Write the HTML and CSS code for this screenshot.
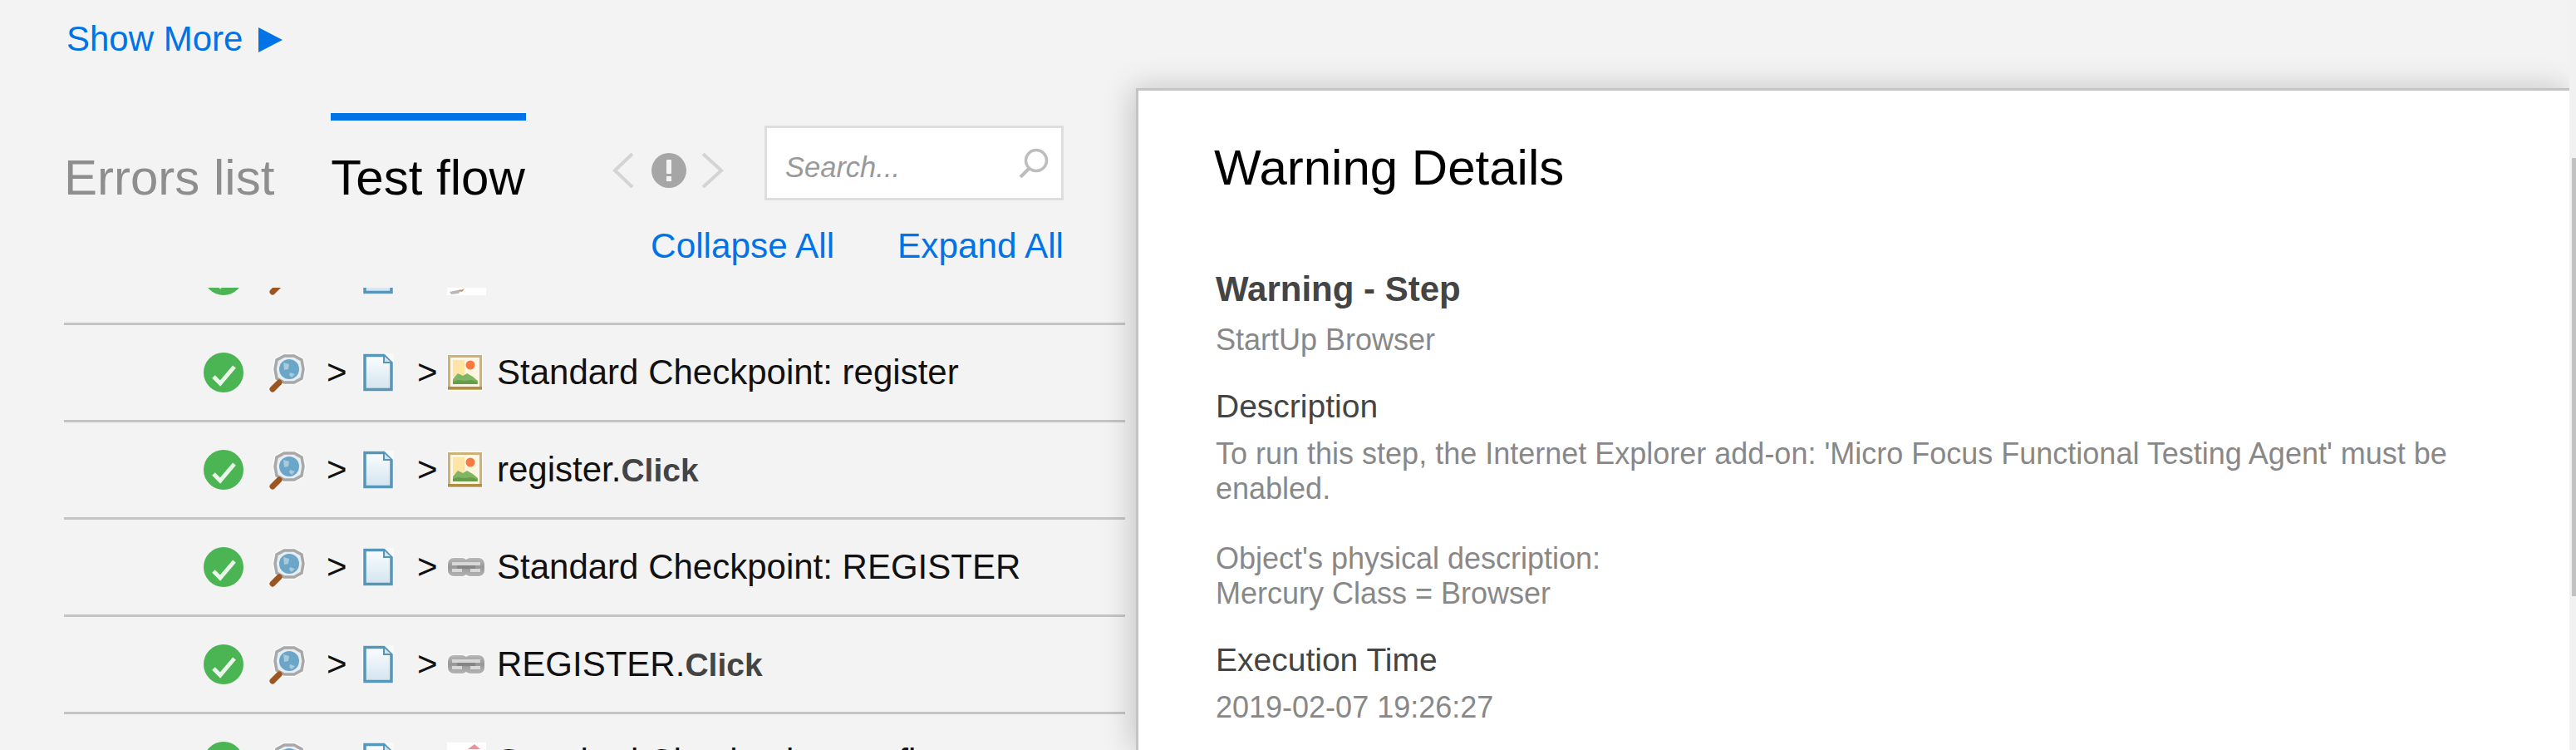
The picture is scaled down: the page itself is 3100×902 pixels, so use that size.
FILE: index.html
```html
<!DOCTYPE html>
<html lang="en">

<head>
  <meta charset="UTF-8" />
  <title>Test run report</title>

  <link rel="stylesheet" href="styles.css">
</head>

<body>
  <svg class="defs" width="0" height="0">
    <defs>
      <linearGradient id="docfill" x1="0" y1="0" x2="0" y2="1">
        <stop offset="0" stop-color="#fbfdfe" />
        <stop offset="1" stop-color="#d3e4f0" />
      </linearGradient>
      <linearGradient id="linkfill" x1="0" y1="0" x2="0" y2="1">
        <stop offset="0" stop-color="#b8b8b8" />
        <stop offset="0.5" stop-color="#979797" />
        <stop offset="1" stop-color="#b4b4b4" />
      </linearGradient>
      <symbol id="i-check" viewBox="0 0 48 48">
        <circle cx="24" cy="24" r="24" fill="#4bb554" />
        <path d="M12 29l8 8 17-20" fill="none" stroke="#e9f6ea" stroke-width="5" />
      </symbol>
      <symbol id="i-find" viewBox="0 0 46 47">
        <path d="M19 0h14l11 6 2 13-2 13-11 6H19L8 32 6 19 8 6z" fill="#fafafa" />
        <path d="M20 3h12l9 5 2 11-2 11-9 5H20l-9-5-2-11 2-11z" fill="#e6eef3" stroke="#a8a8a8" stroke-width="3.500" />
        <circle cx="26" cy="19" r="12" fill="#6ba6c8" />
        <path d="M19 11l7 2-1 6-5 1zM27 23l6 2-4 4-3-3z" fill="#a9cadb" />
        <path d="M14 35L6 43" stroke="#9c5420" stroke-width="7" stroke-linecap="round" />
      </symbol>
      <symbol id="i-doc" viewBox="0 0 38 46">
        <rect width="38" height="46" fill="#f9f9f9" />
        <path d="M3 2.500h23l9 9v32H3z" fill="url(#docfill)" stroke="#5596b9" stroke-width="3.500" />
        <path d="M26 3v8h9" fill="#cfe2ee" stroke="#5596b9" stroke-width="2" />
      </symbol>
      <symbol id="i-image" viewBox="0 0 43 44">
        <rect width="43" height="44" fill="#fbfbfb" />
        <rect x="2.500" y="2.500" width="38" height="39" fill="#fdf6e4" stroke="#cdb277" stroke-width="3" />
        <rect x="7" y="7" width="29" height="29" fill="#fff6e0" />
        <rect x="7" y="7" width="14" height="20" fill="#fee5a6" />
        <circle cx="28" cy="13" r="5.500" fill="#f67a42" />
        <path d="M7 36v-6l6-7 6 3 5-3 7 4 6 5v4z" fill="#80b563" />
        <path d="M7 36v-3l6-2 8 1 8-1 7 2v3z" fill="#649e48" />
        <rect x="1" y="39" width="41" height="3" fill="#b28c40" />
      </symbol>
      <symbol id="i-link" viewBox="0 0 46 24">
        <rect width="46" height="24" rx="7" fill="#f8f8f8" />
        <rect x="1" y="1" width="24" height="22" rx="7" fill="url(#linkfill)" />
        <rect x="21" y="1" width="24" height="22" rx="7" fill="url(#linkfill)" />
        <rect x="6" y="6" width="34" height="4" fill="#d8d8d8" />
        <rect x="6" y="14" width="12" height="4" fill="#d8d8d8" />
        <rect x="28" y="14" width="12" height="4" fill="#d8d8d8" />
        <rect x="12" y="10" width="22" height="4" fill="#858585" />
      </symbol>
      <symbol id="i-page" viewBox="0 0 47 47">
        <rect width="47" height="47" fill="#fff" />
        <path d="M25 8l8-6 7 6z" fill="#e3969c" />
        <path d="M3 43l14-3-3 5-9 1z" fill="#b9b9b9" />
        <path d="M14 42l7-3-3 4z" fill="#d9883f" />
      </symbol>
    </defs>
  </svg>

  <div class="main">
    <a class="link show-more" href="#">Show More
      <svg class="show-arrow" width="29" height="30" viewBox="0 0 29 30"><path d="M0 0l29 15L0 30z" fill="#0073e7" /></svg>
    </a>

    <div class="toolbar">
      <div class="tabs">
        <a class="tab" href="#">Errors list</a>
        <a class="tab tab-on" href="#">Test flow</a>
      </div>
      <div class="tools">
        <div class="tools-top">
          <svg class="nav" width="135" height="44" viewBox="0 0 135 44">
            <path d="M24 2L3 22l21 20" fill="none" stroke="#d4d4d4" stroke-width="4" />
            <circle cx="68" cy="22" r="21" fill="#a6a6a6" />
            <rect x="65" y="9" width="6" height="17" rx="1" fill="#f3f3f3" />
            <rect x="65" y="29" width="6" height="6" fill="#f3f3f3" />
            <path d="M109 2l22 20-22 20" fill="none" stroke="#d4d4d4" stroke-width="4" />
          </svg>
          <div class="search">
            <span class="search-text">Search...</span>
            <svg width="36" height="36" viewBox="0 0 36 36">
              <circle cx="21" cy="15" r="12.500" fill="none" stroke="#bdbdbd" stroke-width="3.500" />
              <path d="M12 25L2 35" stroke="#bdbdbd" stroke-width="4" />
            </svg>
          </div>
        </div>
        <div class="tools-links">
          <a class="link" href="#">Collapse All</a>
          <a class="link" href="#">Expand All</a>
        </div>
      </div>
    </div>

    <div class="list">
      <div class="rows">
        <div class="row">
          <svg class="i-state"><use href="#i-check" /></svg>
          <svg class="i-find"><use href="#i-find" /></svg>
          <span class="gt gt-a"></span>
          <svg class="i-doc"><use href="#i-doc" /></svg>
          <span class="gt gt-b"></span>
          <span class="obj"><svg class="i-page"><use href="#i-page" /></svg></span>
        </div>
        <div class="row">
          <svg class="i-state"><use href="#i-check" /></svg>
          <svg class="i-find"><use href="#i-find" /></svg>
          <span class="gt gt-a">&gt;</span>
          <svg class="i-doc"><use href="#i-doc" /></svg>
          <span class="gt gt-b">&gt;</span>
          <span class="obj"><svg class="i-image"><use href="#i-image" /></svg></span>
          <span class="step">Standard Checkpoint: register</span>
        </div>
        <div class="row">
          <svg class="i-state"><use href="#i-check" /></svg>
          <svg class="i-find"><use href="#i-find" /></svg>
          <span class="gt gt-a">&gt;</span>
          <svg class="i-doc"><use href="#i-doc" /></svg>
          <span class="gt gt-b">&gt;</span>
          <span class="obj"><svg class="i-image"><use href="#i-image" /></svg></span>
          <span class="step">register.<strong>Click</strong></span>
        </div>
        <div class="row">
          <svg class="i-state"><use href="#i-check" /></svg>
          <svg class="i-find"><use href="#i-find" /></svg>
          <span class="gt gt-a">&gt;</span>
          <svg class="i-doc"><use href="#i-doc" /></svg>
          <span class="gt gt-b">&gt;</span>
          <span class="obj"><svg class="i-link"><use href="#i-link" /></svg></span>
          <span class="step">Standard Checkpoint: REGISTER</span>
        </div>
        <div class="row">
          <svg class="i-state"><use href="#i-check" /></svg>
          <svg class="i-find"><use href="#i-find" /></svg>
          <span class="gt gt-a">&gt;</span>
          <svg class="i-doc"><use href="#i-doc" /></svg>
          <span class="gt gt-b">&gt;</span>
          <span class="obj"><svg class="i-link"><use href="#i-link" /></svg></span>
          <span class="step">REGISTER.<strong>Click</strong></span>
        </div>
        <div class="row">
          <svg class="i-state"><use href="#i-check" /></svg>
          <svg class="i-find"><use href="#i-find" /></svg>
          <span class="gt gt-a">&gt;</span>
          <svg class="i-doc"><use href="#i-doc" /></svg>
          <span class="gt gt-b">&gt;</span>
          <span class="obj"><svg class="i-page"><use href="#i-page" /></svg></span>
          <span class="step">Standard Checkpoint: confirm</span>
        </div>
      </div>
    </div>
  </div>

  <div class="panel">
    <h1>Warning Details</h1>
    <div class="panel-body">
      <h2>Warning - Step</h2>
      <p class="first">StartUp Browser</p>
      <h3>Description</h3>
      <p>To run this step, the Internet Explorer add-on: 'Micro Focus Functional Testing Agent' must be enabled.<br><br>Object's physical description:<br>Mercury Class = Browser</p>
      <h3>Execution Time</h3>
      <p>2019-02-07 19:26:27</p>
    </div>
  </div>

  <div class="scrollbar"><div class="thumb"></div></div>
</body>

</html>
```

FILE: styles.css
```css
html,
body {
  height: 100%;
  overflow: hidden;
}

body {
  margin: 0;
  background-color: #f3f3f3;
  font-family: "Liberation Sans", Arial, sans-serif;
  color: #000;
}

a {
  text-decoration: none;
}

.defs {
  display: block;
}

.link {
  color: #0073e7;
  font-size: 42px;
  line-height: 48px;
}

.main {
  width: 1277px;
  margin-left: 77px;
  padding-top: 23px;
}

.show-more {
  display: flex;
  align-items: center;
  gap: 19px;
  padding-left: 3px;
}

.show-arrow {
  margin-top: 2px;
}

/* tabs and tools */
.toolbar {
  display: flex;
  justify-content: space-between;
  height: 184px;
  margin-top: 65px;
  padding-right: 74px;
}

.tabs {
  display: flex;
  gap: 68px;
}

.tab {
  height: 70px;
  padding-top: 34px;
  border-top: 9px solid transparent;
  font-size: 60px;
  line-height: 70px;
  color: #8e8e8e;
}

.tab-on {
  padding-right: 1px;
  border-top-color: #0073e7;
  color: #000;
}

.tools {
  display: flex;
  flex-direction: column;
  align-items: flex-end;
  padding-top: 15px;
}

.tools-top {
  display: flex;
  gap: 48px;
}

.nav {
  margin-top: 32px;
  filter: blur(0.7px);
}

.search {
  display: flex;
  align-items: center;
  justify-content: space-between;
  box-sizing: border-box;
  width: 360px;
  height: 90px;
  padding: 0 15px 0 22px;
  border: 3px solid #dedede;
  background-color: #fff;
}

.search-text {
  margin-top: 10px;
  font-size: 34.500px;
  line-height: 40px;
  font-style: italic;
  color: #999;
}

.tools-links {
  display: flex;
  gap: 76px;
  margin-top: 31px;
}

.tools-links .link {
  font-size: 42.300px;
}

/* test flow list */
.list {
  height: 556px;
  margin-top: 26px;
  overflow: hidden;
}

.rows {
  margin-top: -72px;
}

.row {
  display: flex;
  align-items: center;
  box-sizing: border-box;
  height: 117px;
  padding-left: 168px;
  border-bottom: 3px solid #c4c4c4;
  font-size: 42px;
  line-height: 48px;
  color: #111;
}

.row svg {
  flex: none;
  filter: blur(0.6px);
}

.i-state {
  width: 48px;
  height: 48px;
}

.i-find {
  width: 46px;
  height: 47px;
  margin-left: 29px;
}

.i-doc {
  width: 38px;
  height: 46px;
}

.gt {
  flex: none;
  width: 24.500px;
}

.gt-a {
  margin-left: 25px;
  margin-right: 18px;
}

.gt-b {
  margin-left: 28.500px;
  margin-right: 11.500px;
}

.obj {
  display: flex;
  align-items: center;
  flex: none;
  width: 47px;
  height: 47px;
  margin-right: 13px;
}

.i-image {
  width: 43px;
  height: 44px;
}

.i-link {
  width: 46px;
  height: 24px;
}

.i-page {
  width: 47px;
  height: 47px;
}

.row .i-page {
  filter: none;
}

.step strong {
  font-size: 39px;
  color: #444;
}

/* details drawer, lies over the page */
.panel {
  position: absolute;
  top: 106px;
  left: 1367px;
  right: 8px;
  bottom: 0;
  box-sizing: border-box;
  padding: 58px 91px 0;
  border-top: 3px solid #c4c4c4;
  border-left: 3px solid #c4c4c4;
  background-color: #fff;
  box-shadow: -4px 0 34px rgba(0, 0, 0, 0.2);
  overflow: hidden;
}

.panel h1 {
  margin: 0;
  font-size: 60px;
  line-height: 70px;
  font-weight: normal;
}

.panel-body {
  padding-left: 2px;
}

.panel h2 {
  margin: 87px 0 0;
  font-size: 42px;
  line-height: 48px;
  color: #444;
}

.panel h3 {
  margin: 37px 0 0;
  font-size: 39px;
  line-height: 44px;
  font-weight: normal;
  color: #444;
}

.panel p {
  margin: 14px 0 0;
  font-size: 36px;
  line-height: 42px;
  color: #888;
}

.panel .first {
  margin-top: 16px;
}

.scrollbar {
  position: absolute;
  top: 0;
  right: 0;
  bottom: 0;
  width: 8px;
  background-color: #f1f1f1;
}

.thumb {
  height: 527px;
  margin: 190px 0 0 3px;
  background-color: #c1c1c1;
}
```
